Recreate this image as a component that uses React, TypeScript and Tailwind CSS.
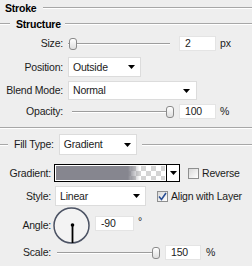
import React from "react";

function Etched({ className = "" }: { className?: string }) {
  return <div className={"h-[2px] border-t border-[#a7a7a7] bg-white " + className} />;
}

function Tri() {
  return (
    <svg width="7" height="4" viewBox="0 0 7 4">
      <path d="M0 0H7L3.5 4Z" fill="#000" />
    </svg>
  );
}

function Select({ value, className = "" }: { value: string; className?: string }) {
  return (
    <div
      className={
        "flex items-center justify-between bg-white border border-[#dcdcdc] pl-[4px] pr-[5px] " + className
      }
    >
      <span>{value}</span>
      <Tri />
    </div>
  );
}

function Input({ value, className = "" }: { value: string; className?: string }) {
  return (
    <div className={"flex h-[15px] items-center bg-white border border-[#e4e4e4] pl-[5px] " + className}>
      {value}
    </div>
  );
}

function Track({ className = "" }: { className?: string }) {
  return <div className={"h-[2px] border-t border-[#9d9d9d] bg-white " + className} />;
}

function Thumb() {
  return (
    <div className="h-[12px] w-[8px] shrink-0 rounded-[3px] border border-[#8a8a8a] bg-gradient-to-b from-white to-[#dedede]" />
  );
}

function Check({ checked = false }: { checked?: boolean }) {
  return (
    <div className="flex h-[11px] w-[11px] shrink-0 items-center justify-center border border-[#8e8f8f] bg-gradient-to-br from-[#d9d9d9] to-white">
      {checked && (
        <svg width="9" height="9" viewBox="0 0 9 9">
          <path d="M1 4.5L3.5 7.5L8 1" fill="none" stroke="#2a4f95" strokeWidth="1.6" />
        </svg>
      )}
    </div>
  );
}

export default function App() {
  return (
    <div className="h-[266px] w-[252px] overflow-hidden bg-[#eeeeee] font-['Liberation_Sans',Arial,sans-serif] text-[10.5px] leading-none tracking-[-0.2px] text-[#1b1b1b]">
      {/* Stroke */}
      <div className="flex h-[16px] items-center">
        <span className="ml-[5px] font-bold text-black">Stroke</span>
        <Etched className="ml-[7px] flex-1" />
      </div>
      {/* Structure */}
      <div className="flex h-[16px] items-center">
        <Etched className="w-[10px]" />
        <span className="ml-[6px] font-bold text-black">Structure</span>
        <Etched className="ml-[4px] flex-1" />
      </div>

      {/* Size */}
      <div className="mt-[4px] flex h-[15px] items-center">
        <div className="w-[63px] text-right">Size:</div>
        <div className="ml-[5px] flex h-full w-[106px] items-center">
          <Track className="w-[1px]" />
          <Thumb />
          <Track className="flex-1 mr-[4px]" />
        </div>
        <Input value="2" className="ml-[5px] w-[37px]" />
        <span className="ml-[4px]">px</span>
      </div>

      {/* Position */}
      <div className="mt-[6px] flex h-[20px] items-center">
        <div className="w-[63px] text-right">Position:</div>
        <Select value="Outside" className="ml-[5px] h-[20px] w-[73px]" />
      </div>

      {/* Blend Mode */}
      <div className="mt-[4px] flex h-[19px] items-center">
        <div className="w-[63px] text-right">Blend Mode:</div>
        <Select value="Normal" className="ml-[5px] h-[19px] w-[129px] pr-[6px]" />
      </div>

      {/* Opacity */}
      <div className="mt-[4px] flex h-[15px] items-center">
        <div className="w-[63px] text-right">Opacity:</div>
        <div className="ml-[5px] flex h-full w-[106px] items-center">
          <Track className="ml-[4px] flex-1" />
          <Thumb />
        </div>
        <Input value="100" className="ml-[5px] w-[37px]" />
        <span className="ml-[4px]">%</span>
      </div>

      <Etched className="mt-[8px]" />

      {/* Fill Type */}
      <div className="mt-[5px] flex h-[21px] items-center">
        <Etched className="w-[8px]" />
        <span className="ml-[6px]">Fill Type:</span>
        <Select value="Gradient" className="ml-[5px] h-[21px] w-[78px] pr-[4px]" />
        <Etched className="ml-[5px] flex-1" />
      </div>

      {/* Gradient */}
      <div className="mt-[9px] flex h-[18px] items-center">
        <div className="w-[51px] text-right">Gradient:</div>
        <div className="ml-[3px] flex h-[18px] w-[126px] border border-black bg-white">
          <div className="m-[1px] flex-1 bg-[linear-gradient(to_right,#86868f_0%,#86868f_66%,rgba(134,134,143,0)_77%),conic-gradient(#d4d4d4_25%,#ffffff_0_50%,#d4d4d4_0_75%,#ffffff_0)] bg-[length:100%_100%,10px_10px]" />
          <div className="flex w-[13px] items-center justify-center border-l border-black">
            <Tri />
          </div>
        </div>
        <div className="ml-[8px]">
          <Check />
        </div>
        <span className="ml-[3px]">Reverse</span>
      </div>

      {/* Style */}
      <div className="mt-[4px] flex h-[20px] items-center">
        <div className="w-[51px] text-right">Style:</div>
        <Select value="Linear" className="ml-[4px] h-[20px] w-[91px] pr-[5px]" />
        <div className="ml-[11px]">
          <Check checked />
        </div>
        <span className="ml-[3px]">Align with Layer</span>
      </div>

      {/* Angle */}
      <div className="mt-[1px] flex h-[37px] items-center">
        <div className="w-[51px] text-right">Angle:</div>
        <svg className="ml-[2px] shrink-0" width="37" height="37" viewBox="0 0 37 37">
          <circle cx="18.5" cy="18.5" r="17.5" fill="#f3f3f3" stroke="#4b5263" strokeWidth="1.5" />
          <line x1="19.5" y1="18" x2="19.5" y2="36" stroke="#000" strokeWidth="1.8" />
          <circle cx="19.5" cy="18" r="1.8" fill="#000" />
        </svg>
        <Input value="-90" className="mb-[4px] ml-[5px] w-[39px]" />
        <span className="ml-[4px] mb-[8px]">°</span>
      </div>

      {/* Scale */}
      <div className="mt-[1px] flex h-[15px] items-center">
        <div className="w-[51px] text-right">Scale:</div>
        <div className="ml-[6px] flex h-full w-[103px] items-center">
          <Track className="flex-1" />
          <Thumb />
        </div>
        <Input value="150" className="ml-[5px] w-[36px]" />
        <span className="ml-[5px]">%</span>
      </div>
    </div>
  );
}
